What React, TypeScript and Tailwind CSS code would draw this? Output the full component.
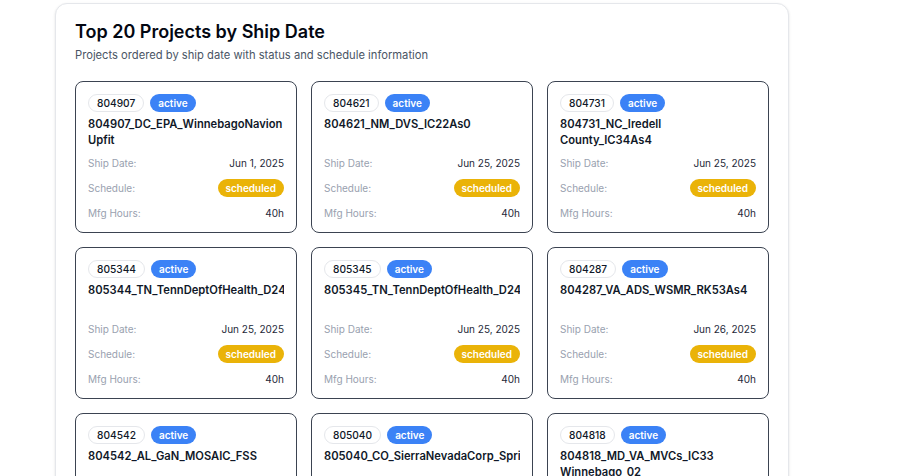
type Project = {
  id: string;
  name: string;
  shipDate: string;
  status: string;
  schedule: string;
  hours: number;
};

const projects: Project[] = [
  { id: "804907", name: "804907_DC_EPA_WinnebagoNavion Upfit", shipDate: "Jun 1, 2025", status: "active", schedule: "scheduled", hours: 40 },
  { id: "804621", name: "804621_NM_DVS_IC22As0", shipDate: "Jun 25, 2025", status: "active", schedule: "scheduled", hours: 40 },
  { id: "804731", name: "804731_NC_Iredell County_IC34As4", shipDate: "Jun 25, 2025", status: "active", schedule: "scheduled", hours: 40 },
  { id: "805344", name: "805344_TN_TennDeptOfHealth_D24MVP", shipDate: "Jun 25, 2025", status: "active", schedule: "scheduled", hours: 40 },
  { id: "805345", name: "805345_TN_TennDeptOfHealth_D24MVP", shipDate: "Jun 25, 2025", status: "active", schedule: "scheduled", hours: 40 },
  { id: "804287", name: "804287_VA_ADS_WSMR_RK53As4", shipDate: "Jun 26, 2025", status: "active", schedule: "scheduled", hours: 40 },
  { id: "804542", name: "804542_AL_GaN_MOSAIC_FSS", shipDate: "Jun 27, 2025", status: "active", schedule: "scheduled", hours: 40 },
  { id: "805040", name: "805040_CO_SierraNevadaCorp_Spring", shipDate: "Jun 27, 2025", status: "active", schedule: "scheduled", hours: 40 },
  { id: "804818", name: "804818_MD_VA_MVCs_IC33 Winnebago_02", shipDate: "Jun 30, 2025", status: "active", schedule: "scheduled", hours: 40 },
];

function ProjectCard({ project }: { project: Project }) {
  return (
    <div className="flex flex-col rounded-lg border border-[#3b4351] bg-white px-3 pt-3 pb-[11px]">
      <div className="flex items-center gap-1.5">
        <span className="rounded-full border border-gray-200 px-2 text-[10.2px] leading-4 font-medium text-gray-900">
          {project.id}
        </span>
        <span className="rounded-full bg-[#3b82f6] px-2 py-px text-[10px] leading-4 font-semibold text-white">
          {project.status}
        </span>
      </div>
      <h3 className="mt-1 h-8 overflow-hidden text-[11.2px] leading-4 font-semibold text-gray-900 [word-spacing:3px]">
        {project.name}
      </h3>
      <div className="mt-[7px] flex flex-col gap-2 text-[10px] leading-4">
        <div className="flex items-center justify-between">
          <span className="text-gray-400">Ship Date:</span>
          <span className="text-gray-800">{project.shipDate}</span>
        </div>
        <div className="flex items-center justify-between">
          <span className="text-gray-400">Schedule:</span>
          <span className="rounded-full bg-[#eab308] px-2 py-px font-semibold text-white">
            {project.schedule}
          </span>
        </div>
        <div className="flex items-center justify-between">
          <span className="text-gray-400">Mfg Hours:</span>
          <span className="text-gray-800">{project.hours}h</span>
        </div>
      </div>
    </div>
  );
}

export default function App() {
  return (
    <div className="min-h-screen bg-white pl-[55px] pt-[3px] font-['Inter',sans-serif]">
      <section className="w-[734px] rounded-xl border border-gray-200 bg-white px-[19px] pt-[14px] pb-5 shadow-sm">
        <h2 className="text-lg leading-7 font-semibold text-gray-950">Top 20 Projects by Ship Date</h2>
        <p className="mt-px text-[11.2px] leading-4 text-gray-600">
          Projects ordered by ship date with status and schedule information
        </p>
        <div className="mt-[18px] grid grid-cols-3 gap-3.5">
          {projects.map((p) => (
            <ProjectCard key={p.id} project={p} />
          ))}
        </div>
      </section>
    </div>
  );
}
